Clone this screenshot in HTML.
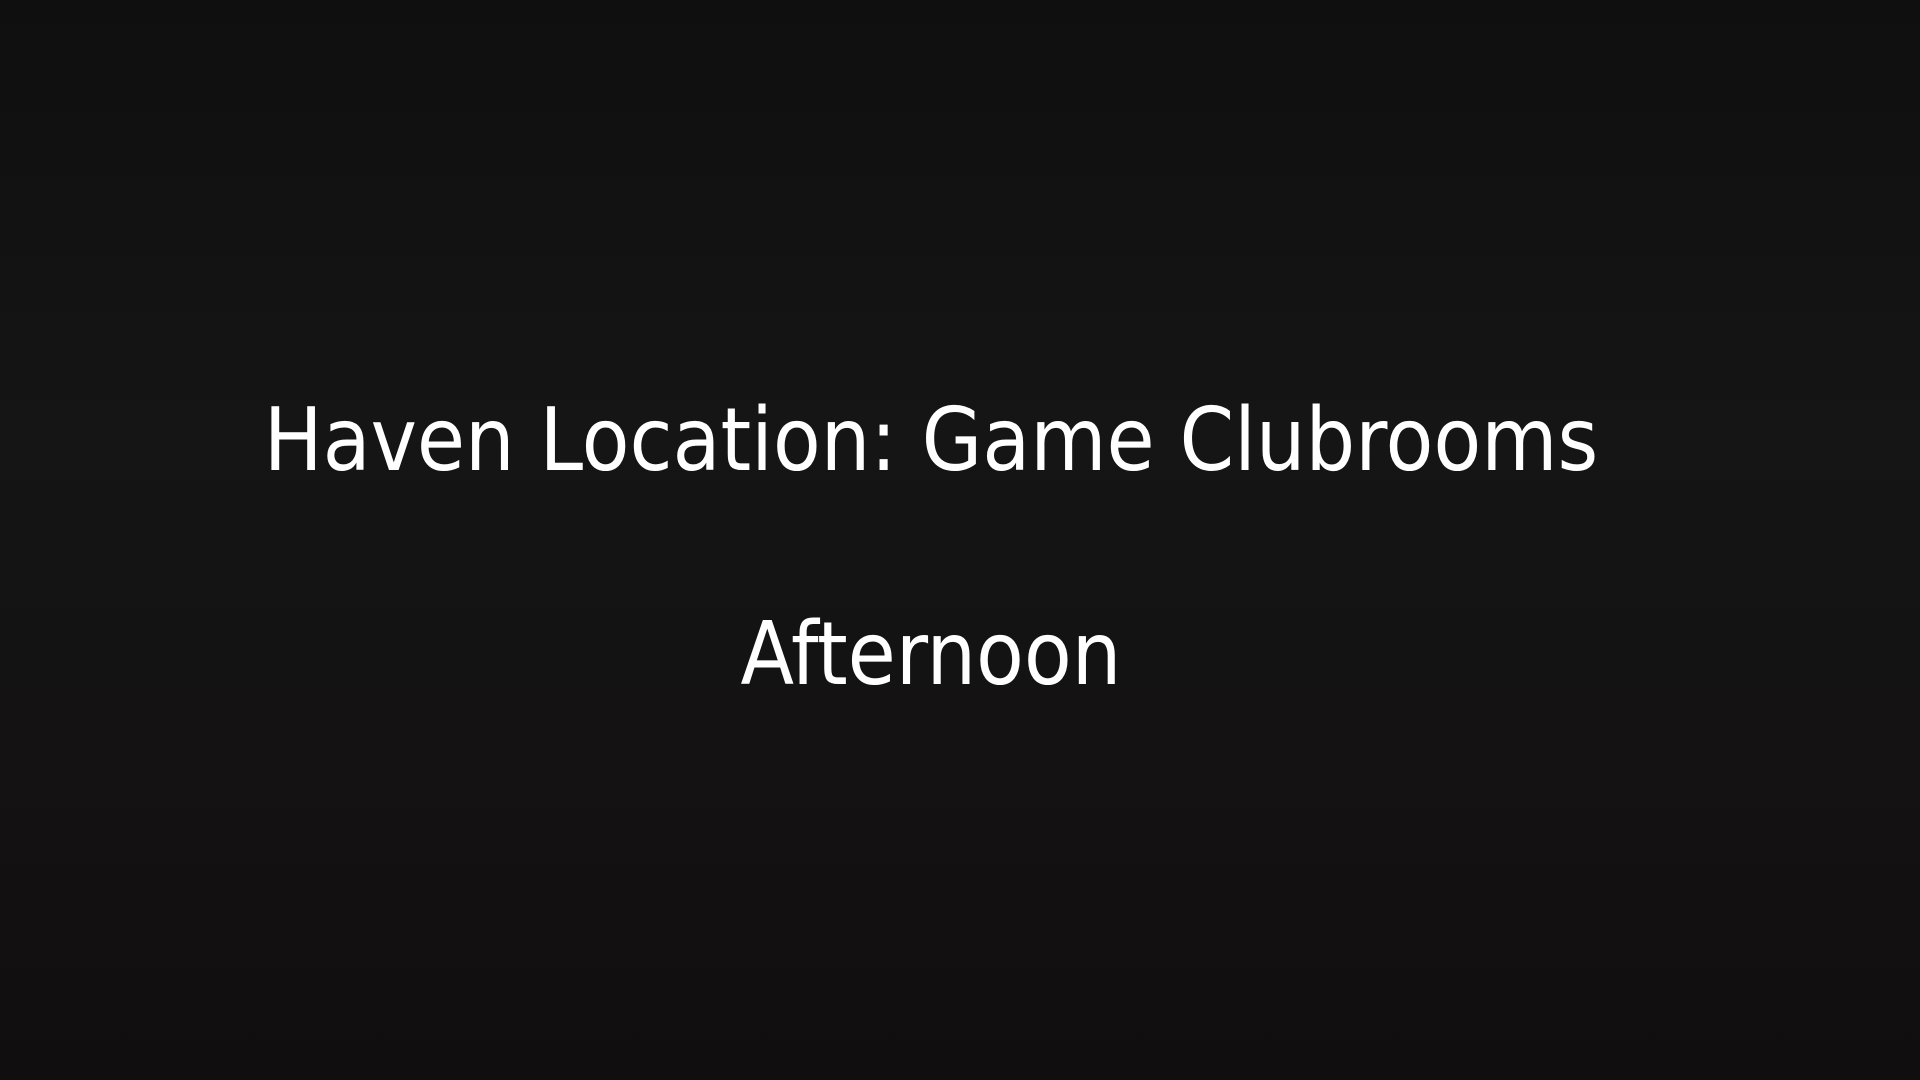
<!DOCTYPE html>
<html><head><meta charset="utf-8"><style>
html,body{margin:0;padding:0;width:1920px;height:1080px;overflow:hidden;background:#121212;}
.bg{position:absolute;inset:0;background:
linear-gradient(180deg,#0f0f0f 0%,#151515 40%,#141212 70%,#100e0e 100%);}
.t{position:absolute;left:0;width:1862px;text-align:center;color:#fff;font-family:"DejaVu Sans Condensed","DejaVu Sans","Liberation Sans",sans-serif;font-size:87px;line-height:1;white-space:nowrap;}
</style></head><body>
<div class="bg"></div>
<div class="t" style="top:397px;">Haven Location: Game Clubrooms</div>
<div class="t" style="top:611px;">Afternoon</div>
</body></html>
